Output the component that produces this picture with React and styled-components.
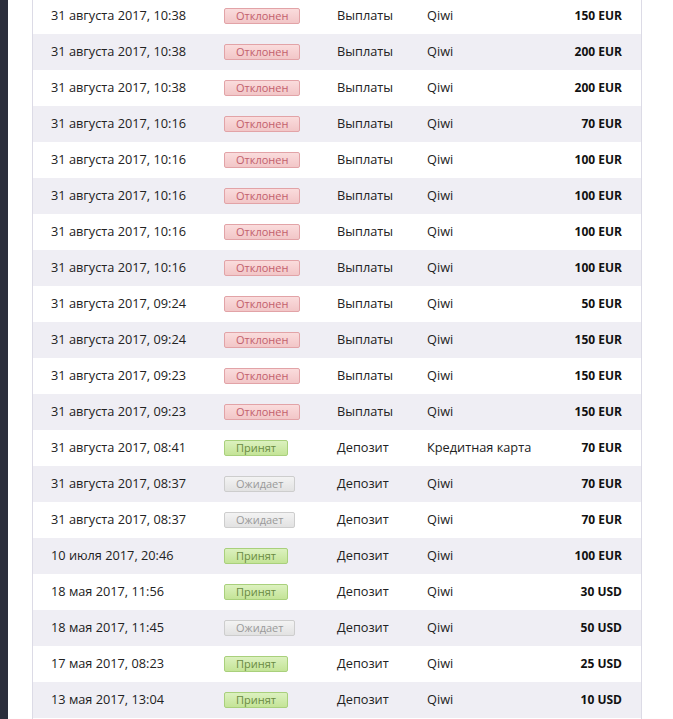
import React from "react";
import styled, { createGlobalStyle } from "styled-components";

const GlobalStyle = createGlobalStyle`
  html, body {
    margin: 0;
    padding: 0;
    background: #ffffff;
    overflow: hidden;
  }
  body {
    font-family: "Open Sans", "Noto Sans", sans-serif;
  }
`;

const Page = styled.div`
  display: flex;
  height: 719px;
  overflow: hidden;
`;

const Sidebar = styled.div`
  width: 8px;
  flex: none;
  background: #2b2e3c;
`;

const Content = styled.div`
  flex: none;
  margin-left: 24px;
  width: 608px;
  border-left: 1px solid #dcdbe6;
  border-right: 1px solid #dcdbe6;
`;

const Table = styled.div`
  margin-top: -2px;
`;

const Row = styled.div`
  display: grid;
  grid-template-columns: 173px 113px 90px 1fr auto;
  align-items: center;
  box-sizing: border-box;
  height: 36px;
  padding: 0 19px 2px 18px;
  background: ${(p) => (p.$odd ? "#efeef4" : "#ffffff")};
  color: #222;
  font-size: 12.75px;
`;

const Cell = styled.div`
  white-space: nowrap;
`;

const Amount = styled.div`
  font-size: 12px;
  font-weight: bold;
  color: #111;
  text-align: right;
`;

const badgeStyles = {
  rejected: {
    bg: "linear-gradient(#fadcdc, #f2c6c7)",
    border: "#e2a3a7",
    color: "#c2606c",
  },
  accepted: {
    bg: "linear-gradient(#dcf1bf, #c4e497)",
    border: "#a9d07c",
    color: "#6a8a42",
  },
  pending: {
    bg: "linear-gradient(#f3f3f3, #e2e2e2)",
    border: "#cdcdcd",
    color: "#9a9a9a",
  },
};

const Badge = styled.span`
  display: inline-block;
  box-sizing: border-box;
  height: 16px;
  line-height: 14px;
  padding: 0 11px;
  font-size: 11px;
  border-radius: 2px;
  border: 1px solid ${(p) => badgeStyles[p.$kind].border};
  background: ${(p) => badgeStyles[p.$kind].bg};
  color: ${(p) => badgeStyles[p.$kind].color};
  margin-top: 1px;
`;

const labels = { rejected: "Отклонен", accepted: "Принят", pending: "Ожидает" };

const rows = [
  ["31 августа 2017, 10:38", "rejected", "Выплаты", "Qiwi", "150 EUR"],
  ["31 августа 2017, 10:38", "rejected", "Выплаты", "Qiwi", "200 EUR"],
  ["31 августа 2017, 10:38", "rejected", "Выплаты", "Qiwi", "200 EUR"],
  ["31 августа 2017, 10:16", "rejected", "Выплаты", "Qiwi", "70 EUR"],
  ["31 августа 2017, 10:16", "rejected", "Выплаты", "Qiwi", "100 EUR"],
  ["31 августа 2017, 10:16", "rejected", "Выплаты", "Qiwi", "100 EUR"],
  ["31 августа 2017, 10:16", "rejected", "Выплаты", "Qiwi", "100 EUR"],
  ["31 августа 2017, 10:16", "rejected", "Выплаты", "Qiwi", "100 EUR"],
  ["31 августа 2017, 09:24", "rejected", "Выплаты", "Qiwi", "50 EUR"],
  ["31 августа 2017, 09:24", "rejected", "Выплаты", "Qiwi", "150 EUR"],
  ["31 августа 2017, 09:23", "rejected", "Выплаты", "Qiwi", "150 EUR"],
  ["31 августа 2017, 09:23", "rejected", "Выплаты", "Qiwi", "150 EUR"],
  ["31 августа 2017, 08:41", "accepted", "Депозит", "Кредитная карта", "70 EUR"],
  ["31 августа 2017, 08:37", "pending", "Депозит", "Qiwi", "70 EUR"],
  ["31 августа 2017, 08:37", "pending", "Депозит", "Qiwi", "70 EUR"],
  ["10 июля 2017, 20:46", "accepted", "Депозит", "Qiwi", "100 EUR"],
  ["18 мая 2017, 11:56", "accepted", "Депозит", "Qiwi", "30 USD"],
  ["18 мая 2017, 11:45", "pending", "Депозит", "Qiwi", "50 USD"],
  ["17 мая 2017, 08:23", "accepted", "Депозит", "Qiwi", "25 USD"],
  ["13 мая 2017, 13:04", "accepted", "Депозит", "Qiwi", "10 USD"],
];

export default function App() {
  return (
    <Page>
      <GlobalStyle />
      <Sidebar />
      <Content>
        <Table>
          {rows.map(([date, status, type, method, amount], i) => (
            <Row key={i} $odd={i % 2 === 1}>
              <Cell>{date}</Cell>
              <Cell>
                <Badge $kind={status}>{labels[status]}</Badge>
              </Cell>
              <Cell>{type}</Cell>
              <Cell>{method}</Cell>
              <Amount>{amount}</Amount>
            </Row>
          ))}
        </Table>
      </Content>
    </Page>
  );
}
